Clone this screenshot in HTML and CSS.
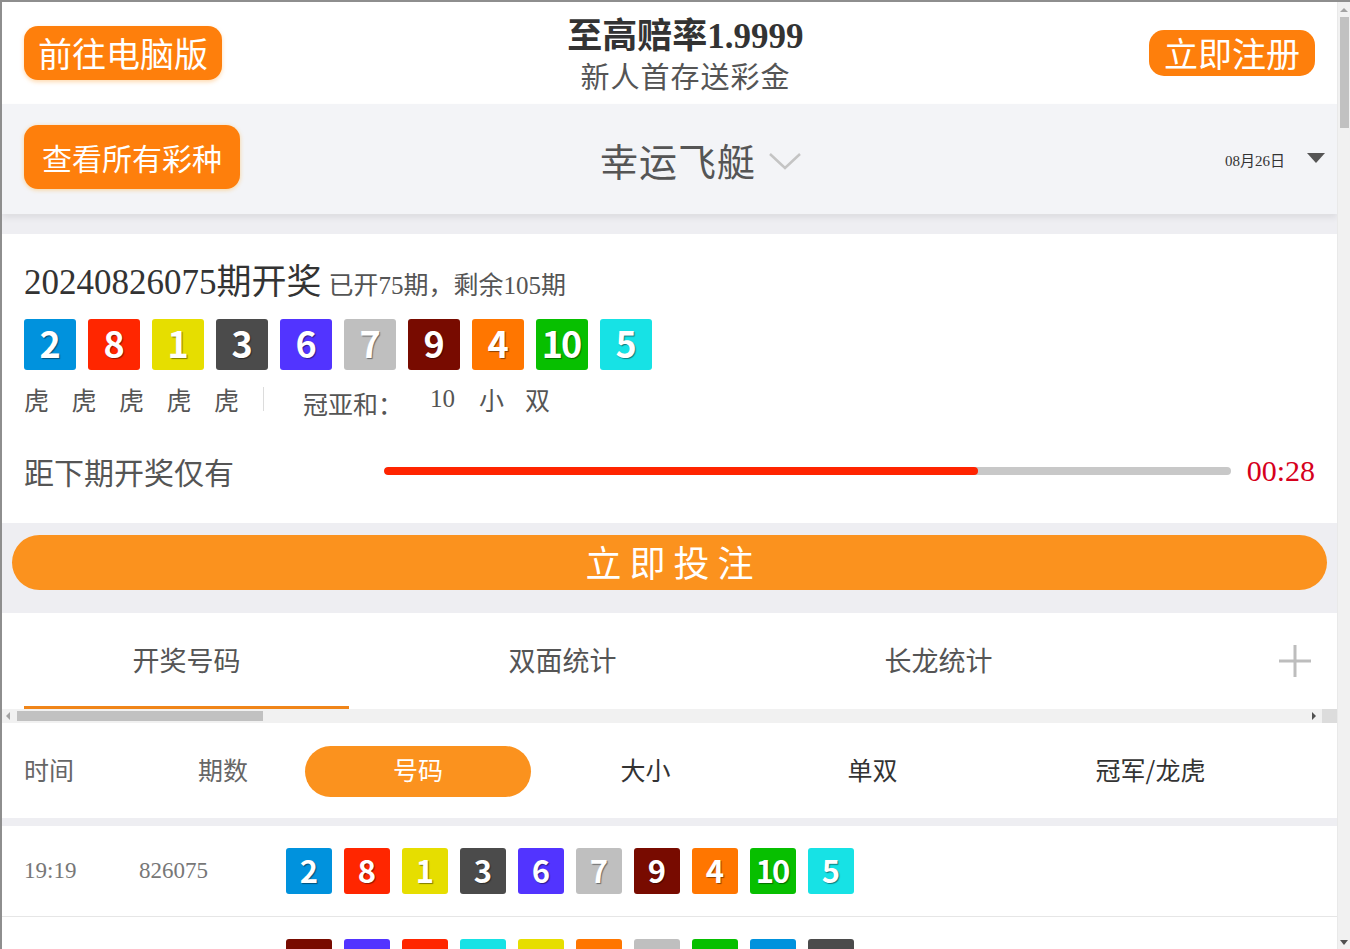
FILE: index.html
```html
<!DOCTYPE html>
<html lang="zh-CN">
<head>
<meta charset="utf-8">
<title>幸运飞艇</title>
<link rel="stylesheet" href="styles.css">
</head>
<body>
<div class="frame">
  <main class="page">
    <header class="topbar">
      <a class="btn btn-pc">前往电脑版</a>
      <div class="promo">
        <div class="promo-title">至高赔率1.9999</div>
        <div class="promo-sub">新人首存送彩金</div>
      </div>
      <a class="btn btn-reg">立即注册</a>
    </header>

    <section class="lotbar">
      <a class="btn btn-all">查看所有彩种</a>
      <div class="lot-name">
        <span>幸运飞艇</span>
        <svg class="chev" width="34" height="20" viewBox="0 0 34 20"><polyline points="2,3 17,17 32,3" fill="none" stroke="#c4c4c4" stroke-width="2.5"/></svg>
      </div>
      <div class="date"><span>08月26日</span><span class="tri"></span></div>
    </section>

    <section class="result">
      <div class="issue"><span class="issue-no">20240826075期开奖</span><span class="issue-meta">已开75期，剩余105期</span></div>
      <div class="balls balls-lg">
        <span class="ball n2">2</span><span class="ball n8">8</span><span class="ball n1">1</span><span class="ball n3">3</span><span class="ball n6">6</span><span class="ball n7">7</span><span class="ball n9">9</span><span class="ball n4">4</span><span class="ball n10 ten">10</span><span class="ball n5">5</span>
      </div>
      <div class="info">
        <span class="tiger">虎</span><span class="tiger">虎</span><span class="tiger">虎</span><span class="tiger">虎</span><span class="tiger last">虎</span>
        <span class="sep"></span>
        <span class="sum-label">冠亚和：</span>
        <span class="sum-val">10</span>
        <span class="sum-size">小</span>
        <span class="sum-odd">双</span>
      </div>
      <div class="countdown">
        <span class="cd-label">距下期开奖仅有</span>
        <div class="bar"><div class="bar-fill" style="width:70.1%"></div></div>
        <span class="cd-time">00:28</span>
      </div>
    </section>

    <a class="bet">立即投注</a>

    <nav class="tabs">
      <span class="tab active">开奖号码</span>
      <span class="tab">双面统计</span>
      <span class="tab">长龙统计</span>
      <svg class="plus" width="34" height="34" viewBox="0 0 34 34"><path d="M17 1V33M1 17H33" stroke="#bdbdbd" stroke-width="3"/></svg>
    </nav>
    <div class="hscroll">
      <span class="hs-left"></span>
      <span class="hs-thumb"></span>
      <span class="hs-right"></span>
      <span class="hs-corner"></span>
    </div>

    <div class="thead">
      <span class="th-time">时间</span>
      <span class="th-issue">期数</span>
      <span class="th-num"><span class="pill">号码</span></span>
      <span class="th">大小</span>
      <span class="th">单双</span>
      <span class="th-last">冠军/龙虎</span>
    </div>

    <div class="row">
      <span class="r-time">19:19</span>
      <span class="r-issue">826075</span>
      <div class="balls balls-sm">
        <span class="ball n2">2</span><span class="ball n8">8</span><span class="ball n1">1</span><span class="ball n3">3</span><span class="ball n6">6</span><span class="ball n7">7</span><span class="ball n9">9</span><span class="ball n4">4</span><span class="ball n10 ten">10</span><span class="ball n5">5</span>
      </div>
    </div>
    <div class="row">
      <span class="r-time">19:18</span>
      <span class="r-issue">826074</span>
      <div class="balls balls-sm">
        <span class="ball n9">9</span><span class="ball n6">6</span><span class="ball n8">8</span><span class="ball n5">5</span><span class="ball n1">1</span><span class="ball n4">4</span><span class="ball n7">7</span><span class="ball n10 ten">10</span><span class="ball n2">2</span><span class="ball n3">3</span>
      </div>
    </div>
  </main>
  <div class="vscroll">
    <span class="vs-up"></span>
    <span class="vs-thumb"></span>
    <span class="vs-down"></span>
  </div>
</div>
</body>
</html>
```
FILE: styles.css
```css
* { box-sizing: border-box; margin: 0; padding: 0; }
html, body { width: 1350px; height: 949px; overflow: hidden; }
body {
  font-family: "Liberation Serif", "Noto Sans CJK SC", serif;
  color: #333;
  background: #fff;
}
.frame {
  display: flex;
  width: 1350px;
  height: 949px;
  border-top: 2px solid #8e8e8e;
  border-left: 2px solid #8e8e8e;
  overflow: hidden;
}
.page {
  flex: 1;
  min-width: 0;
  background: #eeeef2;
  overflow: hidden;
}

/* top header */
.topbar {
  height: 102px;
  background: #fff;
  display: flex;
  align-items: center;
  justify-content: space-between;
  padding: 0 22px;
}
.btn {
  display: inline-block;
  background: #fe7f0c;
  color: #fff;
  font-family: "Noto Sans CJK SC", sans-serif;
  border-radius: 14px;
  text-decoration: none;
  white-space: nowrap;
}
.btn-pc {
  font-size: 34px;
  line-height: 54px;
  padding: 0 14px;
  box-shadow: 0 2px 4px rgba(255, 150, 30, 0.35);
}
.btn-reg {
  font-size: 34px;
  line-height: 46px;
  padding: 0 15px;
  border-radius: 15px;
}
.promo {
  text-align: center;
  padding-top: 6px;
}
.promo-title {
  font-size: 35px;
  font-weight: 700;
  line-height: 38px;
  color: #333;
}
.promo-sub {
  font-family: "Noto Sans CJK SC", sans-serif;
  font-size: 29px;
  line-height: 38px;
  color: #555;
  letter-spacing: 1px;
}

/* lottery bar */
.lotbar {
  height: 110px;
  background: #f3f4f7;
  display: flex;
  align-items: center;
  padding: 0 12px 0 22px;
  box-shadow: 0 4px 6px rgba(0, 0, 0, 0.07);
  margin-bottom: 20px;
}
.btn-all {
  font-size: 30px;
  line-height: 64px;
  padding: 0 18px;
  margin-top: -4px;
  box-shadow: 0 1px 4px rgba(255, 170, 40, 0.45);
}
.lot-name {
  margin-left: 360px;
  display: flex;
  align-items: center;
  gap: 12px;
  font-family: "Noto Sans CJK SC", sans-serif;
  font-size: 38px;
  color: #555;
  letter-spacing: 1px;
}
.chev { margin-top: 4px; }
.date {
  margin-left: auto;
  display: flex;
  align-items: center;
  gap: 22px;
  font-size: 15px;
  color: #333;
}
.tri {
  width: 0;
  height: 0;
  border-left: 9px solid transparent;
  border-right: 9px solid transparent;
  border-top: 10px solid #555;
  margin-top: -3px;
}

/* result card */
.result {
  background: #fff;
  height: 289px;
  padding: 29px 22px 0;
  margin-bottom: 12px;
}
.issue {
  display: flex;
  align-items: baseline;
  gap: 7px;
  line-height: 40px;
}
.issue-no { font-size: 35px; color: #333; }
.issue-meta { font-size: 25px; color: #555; }

.balls { display: flex; gap: 12px; }
.ball {
  display: flex;
  align-items: center;
  justify-content: center;
  color: #fff;
  font-family: "Noto Sans CJK SC", sans-serif;
  font-weight: 700;
  border-radius: 3px;
  text-shadow: 1px 1px 1px rgba(0, 0, 0, 0.45);
}
.ball.ten { letter-spacing: -2px; padding-right: 2px; }
.balls-lg { margin-top: 13px; }
.balls-lg .ball { width: 52px; height: 51px; font-size: 36px; padding-bottom: 5px; }
.balls-sm .ball { width: 46px; height: 46px; font-size: 31px; padding-bottom: 4px; }

.n1 { background: #e6de00; }
.n2 { background: #0092dd; }
.n3 { background: #4b4b4b; }
.n4 { background: #ff7600; }
.n5 { background: #17e2e5; }
.n6 { background: #5234ff; }
.n7 { background: #bfbfbf; }
.n8 { background: #ff2600; }
.n9 { background: #780b00; }
.n10 { background: #07bf00; }

.info {
  display: flex;
  align-items: center;
  margin-top: 14px;
  height: 30px;
  font-size: 25px;
  color: #555;
}
.tiger { margin-right: 22.5px; font-family: "Noto Sans CJK SC", sans-serif; }
.tiger.last { margin-right: 24px; }
.sep { width: 1px; height: 24px; background: #dcdcdc; margin-right: 39px; }
.sum-label { font-family: "Noto Sans CJK SC", sans-serif; margin-top: 8px; }
.sum-val { margin-left: 27px; }
.sum-size { margin-left: 24px; font-family: "Noto Sans CJK SC", sans-serif; }
.sum-odd { margin-left: 21px; font-family: "Noto Sans CJK SC", sans-serif; }

.countdown {
  display: grid;
  grid-template-columns: 344px 1fr auto;
  column-gap: 16px;
  align-items: center;
  margin-top: 35px;
  height: 40px;
}
.cd-label {
  font-family: "Noto Sans CJK SC", sans-serif;
  font-size: 30px;
  color: #555;
}
.bar {
  height: 8px;
  border-radius: 4px;
  background: #c8c8c8;
  overflow: hidden;
}
.bar-fill { height: 100%; background: #ff2400; border-radius: 4px; }
.cd-time { font-size: 30px; color: #d6001c; }

/* bet button */
.bet {
  display: block;
  margin: 0 10px 23px;
  height: 55px;
  border-radius: 28px;
  background: #fb921e;
  color: #fff;
  text-align: center;
  font-family: "Noto Sans CJK SC", sans-serif;
  font-size: 36px;
  line-height: 53px;
  letter-spacing: 8px;
  padding-left: 8px;
  text-decoration: none;
}

/* tabs */
.tabs {
  height: 96px;
  background: #fff;
  display: flex;
  padding: 0 25px 0 22px;
}
.tab {
  width: 325px;
  display: flex;
  align-items: center;
  justify-content: center;
  font-family: "Noto Sans CJK SC", sans-serif;
  font-size: 27px;
  color: #555;
  border-bottom: 3px solid transparent;
}
.tab + .tab { margin-left: 51px; }
.tab.active { border-bottom-color: #f08519; }
.plus { margin-left: auto; align-self: center; }

.hscroll {
  height: 14px;
  background: #f1f1f1;
  display: flex;
  align-items: center;
}
.hs-left {
  margin-left: 4px;
  width: 0; height: 0;
  border-top: 4px solid transparent;
  border-bottom: 4px solid transparent;
  border-right: 4px solid #a3a3a3;
}
.hs-thumb {
  margin-left: 7px;
  width: 246px;
  height: 10px;
  background: #c1c1c1;
}
.hs-right {
  margin-left: auto;
  width: 0; height: 0;
  border-top: 4px solid transparent;
  border-bottom: 4px solid transparent;
  border-left: 4px solid #505050;
}
.hs-corner {
  margin-left: 6px;
  width: 15px;
  height: 14px;
  background: #dcdcdc;
}

/* table header */
.thead {
  height: 95px;
  background: #fff;
  display: flex;
  align-items: center;
  padding: 0 22px;
  font-family: "Noto Sans CJK SC", sans-serif;
  font-size: 25px;
  line-height: 30px;
  margin-bottom: 8px;
}
.th-time { width: 174px; color: #666; padding-bottom: 4px; }
.th-issue { width: 107px; color: #666; padding-bottom: 4px; }
.th-num { width: 227px; padding-top: 2px; }
.pill {
  width: 226px;
  height: 51px;
  border-radius: 26px;
  background: #fb921e;
  color: #fff;
  display: flex;
  align-items: center;
  justify-content: center;
  padding-bottom: 5px;
}
.th { width: 227px; text-align: center; color: #333; padding-bottom: 4px; }
.th-last { flex: 1; text-align: center; color: #333; padding-bottom: 4px; }

/* rows */
.row {
  height: 91px;
  background: #fff;
  display: flex;
  align-items: center;
  padding-left: 22px;
  border-bottom: 1px solid #e6e6e6;
}
.r-time { width: 115px; font-size: 23px; color: #777; }
.r-issue { width: 147px; font-size: 23px; color: #777; }

/* vertical scrollbar */
.vscroll {
  width: 13px;
  background: #f1f1f1;
  border-left: 1px solid #e9e9e9;
  display: flex;
  flex-direction: column;
  align-items: center;
  padding-top: 6px;
}
.vs-up {
  width: 0; height: 0;
  border-left: 4px solid transparent;
  border-right: 4px solid transparent;
  border-bottom: 4px solid #a3a3a3;
}
.vs-thumb {
  margin-top: 5px;
  width: 9px;
  height: 111px;
  background: #c1c1c1;
}
.vs-down {
  margin-top: auto;
  margin-bottom: 4px;
  width: 0; height: 0;
  border-left: 4px solid transparent;
  border-right: 4px solid transparent;
  border-top: 5px solid #505050;
}
```
